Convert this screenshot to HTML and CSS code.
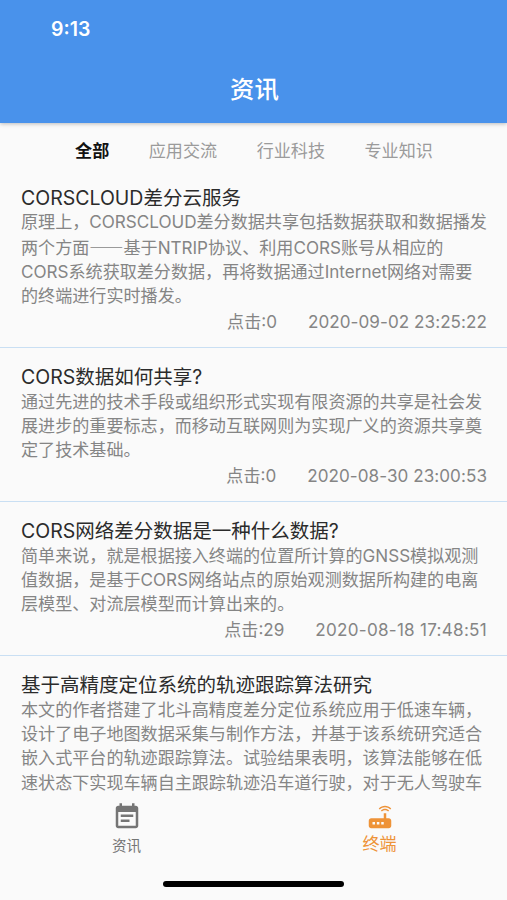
FILE: index.html
```
<!DOCTYPE html>
<html lang="zh-CN">
<head>
  <meta charset="UTF-8" />
  <meta name="viewport" content="width=device-width, initial-scale=1.0" />
  <title>资讯</title>
  <link rel="stylesheet" href="styles.css">
</head>
<body>
  <div class="app">
    <header class="header">
      <div class="status-bar">9:13</div>
      <h1 class="header-title">资讯</h1>
    </header>

    <!-- 分类 -->
    <nav class="tabs">
      <a class="tab active">全部</a>
      <a class="tab">应用交流</a>
      <a class="tab">行业科技</a>
      <a class="tab">专业知识</a>
    </nav>

    <!-- 资讯列表 -->
    <main class="news-list">
      <article class="news-item">
        <h2>CORSCLOUD差分云服务</h2>
        <p>原理上，CORSCLOUD差分数据共享包括数据获取和数据播发<br>两个方面<span class="dash">——</span>基于NTRIP协议、利用CORS账号从相应的<br>CORS系统获取差分数据，再将数据通过Internet网络对需要<br>的终端进行实时播发。</p>
        <div class="meta"><span class="hits">点击:0</span><span class="date">2020-09-02 23:25:22</span></div>
      </article>
      <article class="news-item">
        <h2>CORS数据如何共享?</h2>
        <p>通过先进的技术手段或组织形式实现有限资源的共享是社会发<br>展进步的重要标志，而移动互联网则为实现广义的资源共享奠<br>定了技术基础。</p>
        <div class="meta"><span class="hits">点击:0</span><span class="date">2020-08-30 23:00:53</span></div>
      </article>
      <article class="news-item">
        <h2>CORS网络差分数据是一种什么数据?</h2>
        <p>简单来说，就是根据接入终端的位置所计算的GNSS模拟观测<br>值数据，是基于CORS网络站点的原始观测数据所构建的电离<br>层模型、对流层模型而计算出来的。</p>
        <div class="meta"><span class="hits">点击:29</span><span class="date wide">2020-08-18 17:48:51</span></div>
      </article>
      <article class="news-item">
        <h2>基于高精度定位系统的轨迹跟踪算法研究</h2>
        <p>本文的作者搭建了北斗高精度差分定位系统应用于低速车辆，<br>设计了电子地图数据采集与制作方法，并基于该系统研究适合<br>嵌入式平台的轨迹跟踪算法。试验结果表明，该算法能够在低<br>速状态下实现车辆自主跟踪轨迹沿车道行驶，对于无人驾驶车</p>
      </article>
    </main>

    <!-- 底部导航 -->
    <footer class="bottom">
      <nav class="bottom-nav">
        <a class="nav-item">
          <svg viewBox="0 0 24 24"><path d="M17 10H7v2h10v-2zm2-7h-1V1h-2v2H8V1H6v2H5c-1.11 0-1.99.9-1.99 2L3 19c0 1.1.89 2 2 2h14c1.1 0 2-.9 2-2V5c0-1.1-.9-2-2-2zm0 16H5V8h14v11zm-5-5H7v2h7v-2z"/></svg>
          <span>资讯</span>
        </a>
        <a class="nav-item active">
          <svg viewBox="0 0 24 24"><path d="M20.2 5.9l.8-.8C19.6 3.7 17.8 3 16 3s-3.6.7-5 2.1l.8.8C13 4.8 14.5 4.2 16 4.2s3 .6 4.2 1.7zm-.9.8c-.9-.9-2.1-1.4-3.3-1.4s-2.4.5-3.3 1.4l.8.8c.7-.7 1.6-1 2.5-1 .9 0 1.8.3 2.5 1l.8-.8zM19 13h-2V9h-2v4H5c-1.1 0-2 .9-2 2v4c0 1.1.9 2 2 2h14c1.1 0 2-.9 2-2v-4c0-1.1-.9-2-2-2zM8 18H6v-2h2v2zm3.5 0h-2v-2h2v2zm3.5 0h-2v-2h2v2z"/></svg>
          <span>终端</span>
        </a>
      </nav>
      <div class="home-bar"></div>
    </footer>
  </div>
</body>
</html>
```
FILE: styles.css
```
:root {
  --blue: #4992eb;
  --bg: #fafafa;
  --text: #2b2b2b;
  --gray: #858585;
  --orange: #ee9338;
}

* {
  box-sizing: border-box;
  margin: 0;
  padding: 0;
}

body {
  background: var(--bg);
  font-family: Inter, "Noto Sans CJK SC", sans-serif;
  color: var(--text);
}

.app {
  display: flex;
  flex-direction: column;
  height: 900px;
  overflow: hidden;
}

/* 顶部 */
.header {
  flex: none;
  height: 123px;
  background: var(--blue);
  color: #fff;
  box-shadow: 0 1px 4px rgba(0, 0, 0, 0.25);
}

.status-bar {
  height: 56px;
  padding-left: 51px;
  font-size: 19.5px;
  font-weight: 600;
  line-height: 58px;
}

.header-title {
  padding-left: 2px;
  font-size: 24.4px;
  font-weight: 500;
  line-height: 67px;
  text-align: center;
}

.tabs {
  flex: none;
  display: flex;
  justify-content: center;
  gap: 39.5px;
  height: 46px;
  padding-left: 1px;
  font-size: 17.1px;
  line-height: 56px;
  color: #9b9b9b;
}

.tab.active {
  color: #111;
  font-weight: 700;
}

/* 列表 */
.news-list {
  flex: 1;
  min-height: 0;
  overflow: hidden;
}

.news-item {
  padding: 16.6px 20px 13.7px 21px;
  border-bottom: 1px solid #c9dff3;
  white-space: nowrap;
}

.news-item h2 {
  font-size: 19.5px;
  font-weight: 400;
  line-height: 24.5px;
}

.news-item p {
  font-size: 17.08px;
  line-height: 24.4px;
  color: var(--gray);
}

.dash {
  font-family: "Noto Sans CJK SC", sans-serif;
}

.meta {
  display: flex;
  justify-content: flex-end;
  gap: 31px;
  font-size: 17.08px;
  line-height: 25px;
  color: var(--gray);
}

.date {
  letter-spacing: 0.06px;
}

.date.wide {
  letter-spacing: 0.27px;
}

/* 底部导航 */
.bottom {
  flex: none;
  height: 104px;
  background: var(--bg);
}

.bottom-nav {
  display: flex;
  height: 85px;
  padding-top: 6px;
}

.nav-item {
  flex: 1;
  display: flex;
  flex-direction: column;
  align-items: center;
  font-size: 14.6px;
  color: #757575;
}

.nav-item svg {
  width: 30px;
  height: 30px;
  fill: currentColor;
}

.nav-item span {
  line-height: 28px;
}

.nav-item.active {
  padding-right: 1px;
  font-size: 17.1px;
  color: var(--orange);
}

.nav-item.active span {
  line-height: 24px;
}

.home-bar {
  width: 181px;
  height: 6px;
  margin: 0 auto;
  border-radius: 3px;
  background: #000;
}
```
